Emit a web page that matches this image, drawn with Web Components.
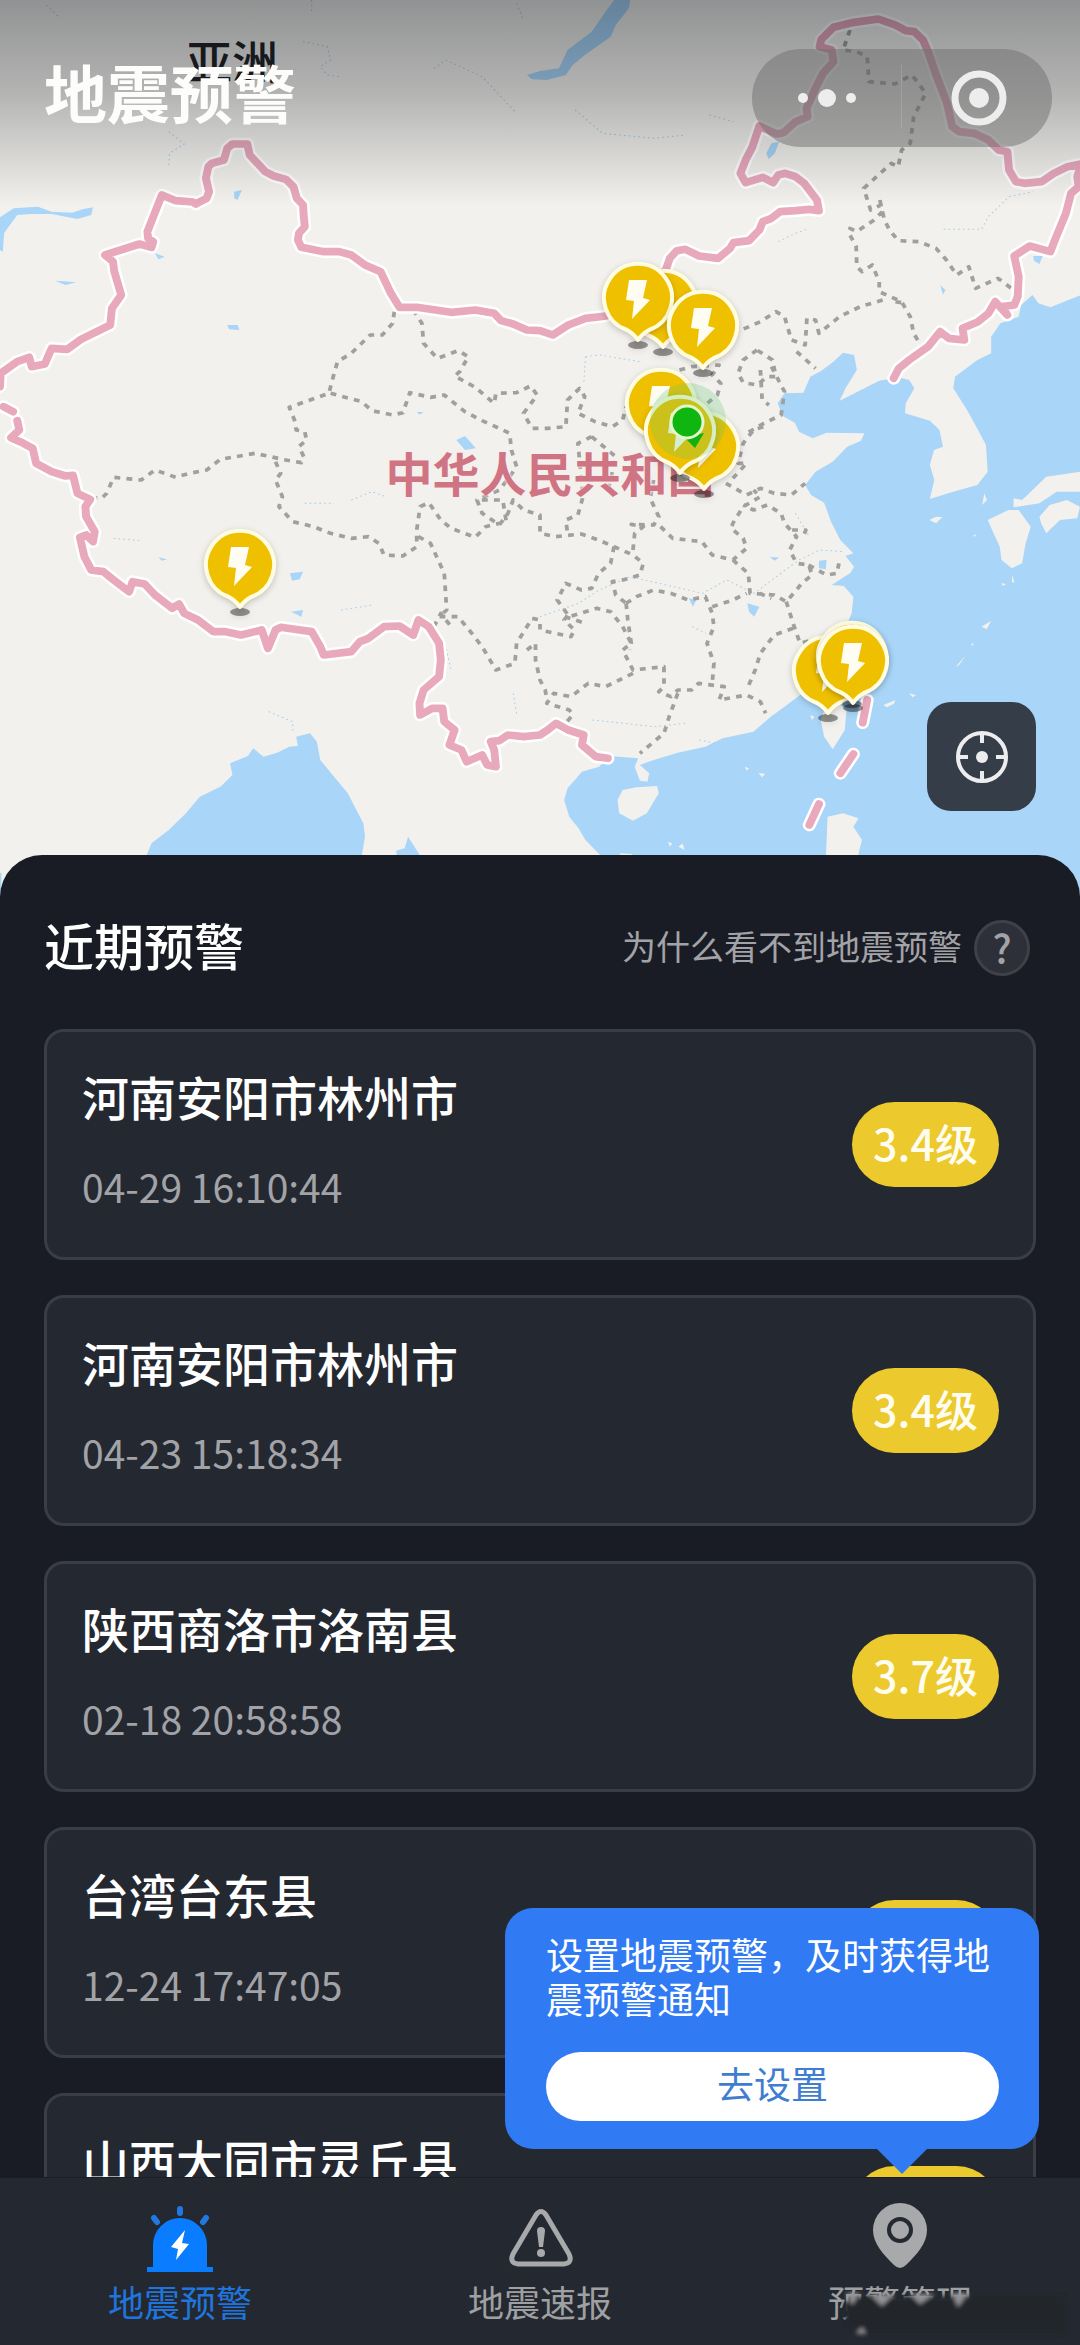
<!DOCTYPE html>
<html lang="zh-CN">
<head>
  <meta charset="utf-8">
  <meta name="viewport" content="width=device-width, initial-scale=1">
  <title>地震预警</title>
  <style>
    body {
      margin: 0;
      background: #191c24;
      font-family: "Noto Sans CJK SC", sans-serif;
    }
  </style>
</head>
<body>
  <quake-app>
    <quake-map slot="map">
      <map-label x="232" y="59">亚洲</map-label>
      <map-label x="550" y="472" country>中华人民共和国</map-label>
      <map-pin x="663" y="350"></map-pin>
      <map-pin x="638" y="343"></map-pin>
      <map-pin x="703" y="371"></map-pin>
      <map-pin x="661" y="449"></map-pin>
      <map-pin x="704" y="492"></map-pin>
      <map-pin x="680" y="476"></map-pin>
      <map-pin x="240" y="610"></map-pin>
      <map-pin x="828" y="716"></map-pin>
      <map-pin x="852" y="702"></map-pin>
      <map-pin x="853" y="706"></map-pin>
      <my-position x="687" y="422"></my-position>
    </quake-map>
    <warning-panel>
      <warning-card place="河南安阳市林州市" time="04-29 16:10:44" level="3.4级"></warning-card>
      <warning-card place="河南安阳市林州市" time="04-23 15:18:34" level="3.4级"></warning-card>
      <warning-card place="陕西商洛市洛南县" time="02-18 20:58:58" level="3.7级"></warning-card>
      <warning-card place="台湾台东县" time="12-24 17:47:05"></warning-card>
      <warning-card place="山西大同市灵丘县"></warning-card>
    </warning-panel>
    <tab-bar slot="tabs">
      <setup-tip slot="tip">
        设置地震预警，及时获得地震预警通知
        <span slot="action">去设置</span>
      </setup-tip>
    </tab-bar>
  </quake-app>

  <script>
    class QuakeApp extends HTMLElement {
      constructor() {
        super();
        this.attachShadow({ mode: 'open' }).innerHTML = `
          <style>
            :host {
              display: flex;
              flex-direction: column;
              height: 100vh;
            }

            main {
              flex: 1;
              min-height: 0;
              overflow: hidden;
            }
          </style>
          <main>
            <slot name="map"></slot>
            <slot></slot>
          </main>
          <slot name="tabs"></slot>
        `;
      }
    }

    // Everything on the map is placed on a 1080 x 900 grid
    class MapItem extends HTMLElement {
      connectedCallback() {
        this.style.left = `${this.getAttribute('x') / 1080 * 100}%`;
        this.style.top = `${this.getAttribute('y') / 900 * 100}%`;
      }
    }

    class MapLabel extends MapItem {
      constructor() {
        super();
        this.attachShadow({ mode: 'open' }).innerHTML = `
          <style>
            :host {
              position: absolute;
              transform: translate(-50%, -50%);
              white-space: nowrap;
              font-size: 46px;
              line-height: 64px;
              font-weight: 500;
              color: #202226;
            }

            :host([country]) {
              font-size: 47px;
              font-weight: 700;
              color: #cf7483;
              text-shadow: 0 0 3px #fbeeee, 0 0 3px #fbeeee;
            }
          </style>
          <slot></slot>
        `;
      }
    }

    class MapPin extends MapItem {
      constructor() {
        super();
        this.attachShadow({ mode: 'open' }).innerHTML = `
          <style>
            :host {
              position: absolute;
              transform: translate(-40px, -84px);
            }

            svg {
              display: block;
              filter: drop-shadow(0 2px 3px #0003);
            }
          </style>
          <svg width="80" height="96" viewBox="0 0 80 96" aria-hidden="true">
            <ellipse cx="40" cy="86" rx="10" ry="4" fill="#0006"/>
            <path d="M40 81Q36 75 29 71A34 34 0 1 1 51 71Q44 75 40 81Z" fill="#efc000" stroke="#fffce0" stroke-width="4" stroke-linejoin="round"/>
            <path d="M31 21H49L45 39L52 41L34 60L36 42L28 41Z" fill="#fffdf2"/>
          </svg>
        `;
      }
    }

    class MyPosition extends MapItem {
      constructor() {
        super();
        this.attachShadow({ mode: 'open' }).innerHTML = `
          <style>
            :host {
              position: absolute;
              transform: translate(-40px, -40px);
            }

            svg {
              display: block;
            }
          </style>
          <svg width="80" height="80" viewBox="0 0 80 80" aria-hidden="true">
            <circle cx="41" cy="39" r="38" fill="#5bc46d" fill-opacity=".25"/>
            <path d="M37 55L57 51L48 66Z" fill="#10b010"/>
            <circle cx="40" cy="40" r="16" fill="#0fb60f" stroke="#e4f7c8" stroke-width="3"/>
          </svg>
        `;
      }
    }

    class QuakeMap extends HTMLElement {
      constructor() {
        super();
        this.attachShadow({ mode: 'open' }).innerHTML = `
          <style>
            :host {
              display: block;
              position: relative;
              aspect-ratio: 1080 / 900;
              overflow: hidden;
              background: #f2f1ed;
            }

            .map {
              display: block;
              width: 100%;
            }

            header {
              position: absolute;
              inset: 0 0 auto 0;
              box-sizing: border-box;
              display: flex;
              justify-content: space-between;
              height: 206px;
              padding: 49px 28px 0 44px;
              background: linear-gradient(rgba(0, 4, 12, .4), rgba(0, 4, 12, .26) 45%, rgba(0, 4, 12, 0));
            }

            h1 {
              margin: 0;
              font-size: 63px;
              line-height: 84px;
              font-weight: 700;
              color: #fdfdfb;
            }

            .capsule {
              display: grid;
              grid-template-columns: 1fr 1fr;
              width: 300px;
              height: 98px;
              border-radius: 49px;
              background: rgba(112, 112, 112, .5);
            }

            button {
              padding: 0;
              border: 0;
              background: none;
              cursor: pointer;
            }

            .capsule svg {
              display: block;
            }

            .locate {
              position: absolute;
              right: 44px;
              bottom: 89px;
              display: grid;
              place-items: center;
              width: 109px;
              height: 109px;
              border-radius: 24px;
              background: #353e48;
            }

            .sea { fill: #a8d5f8; }
            .land { fill: #f2f1ed; }
            .river { fill: none; stroke: #a8cdec; stroke-width: 3; stroke-dasharray: 5 9; }
            .province { fill: none; stroke: #a0a09e; stroke-width: 11; stroke-dasharray: 17 18; stroke-linejoin: round; }
            .halo { fill: none; stroke: #fff; stroke-width: 38; stroke-linejoin: round; stroke-linecap: round; }
            .border { fill: none; stroke: #e9a9bd; stroke-width: 23; stroke-linejoin: round; stroke-linecap: round; }
          </style>
          <svg class="map" viewBox="0 0 1080 900" aria-hidden="true">
            <defs>
              <path id="frontier" d="M0 1160L2 1120L50 1085L85 1072L92 1100L130 1092L150 1045L195 1048L235 1018L320 975L325 925L352 885L332 815L328 785L305 765L405 732L440 742L445 725L430 715L428 695L470 585L510 602L560 606L568 612L600 595L607 575L598 535L605 500L615 490L650 480L660 445L675 432L718 432L725 465L770 515L795 528L830 538L852 560L862 595L880 615L882 650L885 680L868 700L865 720L875 742L940 755L985 755L1020 765L1060 795L1105 815L1135 880L1160 922L1210 922L1310 937L1380 930L1435 940L1455 962L1490 972L1530 990L1568 992L1605 1005L1650 975L1700 955L1760 948L1933 810L1945 775L1965 752L1990 748L2030 768L2085 775L2120 745L2130 728L2175 722L2205 690L2215 665L2240 655L2265 635L2310 632L2350 628L2378 632L2372 600L2335 550L2310 530L2280 520L2260 525L2245 548L2215 532L2165 548L2150 520L2165 480L2185 440L2205 378L2255 402L2275 398L2310 365L2345 350L2342 325L2370 260L2390 220L2420 185L2415 150L2380 140L2385 118L2420 82L2480 67L2550 57L2600 75L2630 92L2655 95L2680 120L2695 155L2720 230L2750 310L2765 380L2785 395L2830 400L2870 420L2900 450L2925 455L2930 510L2950 545L2975 550L3025 545L3060 520L3100 500L3140 492L3128 530L3132 560L3110 580L3095 640L3065 715L3050 755L2990 738L2945 768L2958 830L2955 890L2945 915L2910 920L2925 945L2890 905L2870 940L2840 965L2795 985L2800 1020L2755 1015L2730 995L2695 1040L2640 1080L2610 1105L2595 1135M10 1220L38 1235M50 1262L56 1290L32 1313L68 1330L95 1345L105 1390L150 1415L190 1428L212 1426L225 1480L262 1498L248 1520L250 1550L275 1595L270 1625L250 1605L232 1612L245 1670L265 1710L300 1715L330 1740L375 1775L385 1745L420 1752L450 1785L500 1825L520 1812L535 1840L575 1860L620 1895L655 1895L700 1905L760 1890L778 1945L800 1890L815 1882L905 1895L930 1940L940 1965L1020 1955L1045 1925L1070 1915L1115 1880L1160 1878L1200 1905L1215 1860L1245 1880L1275 1930L1280 1980L1275 2030L1230 2070L1218 2110L1220 2145L1255 2125L1285 2125L1290 2165L1320 2190L1305 2235L1340 2250L1355 2285L1400 2265L1415 2295L1440 2300L1435 2250L1425 2225L1450 2222L1475 2205L1520 2210L1568 2205L1590 2190L1615 2170L1650 2190L1695 2205L1690 2235L1730 2270L1765 2275M2518 2100L2505 2168M2478 2262L2440 2320M2378 2412L2350 2475"/>
            </defs>
            <!-- outlines below are drawn on a 3136 x 2700 grid -->
            <g transform="scale(.34439 .33333)">
              <path class="sea" d="M3140 885L3090 905L3050 922L3015 910L2998 885L2965 915L2958 950L2905 970L2878 1010L2878 1060L2838 1080L2773 1130L2768 1165L2808 1230L2840 1290L2863 1335L2868 1415L2838 1455L2768 1475L2700 1497L2713 1440L2700 1395L2712 1350L2738 1340L2728 1290L2700 1262L2628 1240L2630 1210L2655 1165L2640 1140L2608 1132L2553 1142L2500 1170L2438 1202L2455 1165L2488 1110L2480 1065L2448 1058L2420 1085L2385 1112L2353 1130L2333 1178L2278 1180L2258 1210L2273 1248L2308 1268L2320 1295L2360 1315L2400 1298L2510 1300L2500 1322L2460 1340L2418 1385L2368 1415L2338 1455L2355 1485L2393 1508L2413 1565L2440 1620L2478 1660L2455 1668L2480 1700L2470 1718L2415 1755L2450 1758L2478 1790L2473 1840L2458 1875L2440 1940L2400 2020L2330 2080L2278 2120L2238 2150L2188 2195L2098 2215L2048 2240L1968 2258L1898 2280L1858 2295L1885 2320L1880 2345L1858 2342L1843 2300L1853 2275L1768 2268L1740 2300L1690 2315L1648 2365L1638 2400L1653 2450L1680 2485L1700 2520L1745 2568L1800 2700H3140Z
                M420 2580L440 2530L490 2490L540 2440L580 2390L640 2360L675 2325L668 2290L720 2268L735 2245L765 2270L805 2258L840 2240L865 2238L860 2210L900 2200L920 2225L930 2280L970 2330L1010 2380L1030 2420L1055 2470L1060 2510L1048 2580Z
                M1150 2552L1175 2545L1185 2510L1228 2580H1155Z M-5 2615L4 2620V2700H-5Z
                M-5 655L40 625L110 620L150 635L210 638L240 628L270 622L265 645L225 657L150 642L90 642L50 645L25 680L12 700L8 755L0 750Z
                M1783 0H1830L1826 25L1788 75L1773 110L1698 165L1663 195L1643 225L1588 240L1545 238L1530 225L1568 213L1623 205L1648 150L1718 95L1748 50Z
                M2240 430L2262 425L2250 460L2232 478L2225 460Z M680 575L702 570L690 600L680 595Z M450 760L478 770L460 778Z M160 842L222 847L190 855Z M660 975L690 975L695 990L665 988Z
                M3000 768L3028 768L3018 792L3002 782Z M1325 1320L1350 1308L1382 1345L1350 1350Z M842 1720L880 1715L870 1738L848 1742Z M845 1835L880 1830L875 1850Z M2378 1682L2400 1680L2398 1708L2378 1705Z M2170 1810L2205 1820L2190 1850L2175 1835Z M2000 1795L2022 1800L2012 1820Z M2235 1672L2262 1672L2250 1682Z M1210 1235L1230 1237L1218 1244Z M460 1672L485 1678L470 1682Z M2730 855L2745 870L2738 885Z"/>
              <path class="land" d="M1793 2400L1808 2370L1848 2362L1908 2358L1913 2380L1878 2440L1838 2462L1798 2440Z
                M2458 2130L2453 2190L2418 2248L2393 2210L2383 2160L2408 2090Z
                M2403 2450L2448 2440L2493 2455L2478 2480L2503 2520L2493 2560V2700H2393Z
                M2698 1560L2718 1550L2736 1552L2718 1570Z
                M2868 1560L2928 1530L2958 1530L2993 1580L2978 1630L2968 1690L2938 1705L2908 1680L2903 1640L2885 1600Z
                M2943 1495L2968 1500L3038 1430L3136 1415V1475L3068 1475L3018 1510L2943 1522Z
                M3018 1550L3048 1515L3098 1500L3136 1520L3128 1555L3078 1560L3038 1600L3023 1570Z
                M2858 1480L2866 1500L2852 1515Z M2825 1607L2836 1602L2830 1610Z M2940 1725L2946 1748L2938 1745Z M2908 1750L2922 1752L2912 1758Z
                M2850 1880L2878 1862L2865 1888Z M2775 2000L2805 1965L2785 1995Z M2820 1930L2828 1932L2822 1938Z M2565 2115L2600 2100L2595 2112L2575 2122Z M2640 2080L2660 2085L2650 2092Z
                M2163 2300L2175 2305L2168 2312Z M2202 2318L2222 2322L2212 2332Z M2352 2145L2365 2150L2358 2160Z M1940 2525L1952 2530L1945 2540Z M1970 2540L1982 2530L1988 2550Z M1800 2560L1835 2562L1838 2570H1802Z"/>
              <path class="river" d="M490 395L535 432L492 460L490 500M880 125L950 140L960 180L930 200L950 225L985 230M905 0V40M1500 10L1520 60M135 15L170 50M1700 1070L1740 1065L1860 1085M1700 1070L1695 1150M2740 688L2850 688L2870 650L2930 590L3000 575M2260 725L2310 700L2350 685M1670 330L1750 400L1900 415L1990 405M2060 345L2130 365M1568 1850L1680 1810L1740 1770L1830 1730L2040 1780L2110 1740L2190 1780L2280 1710L2320 1680L2380 1650L2450 1655M780 2135L850 2165L850 2200M330 1615L410 1622M990 1830L1080 1815M1290 1920L1310 2010M1490 2080L1500 2140M1020 1500L1080 1475L1120 1490M885 1510L970 1510M1260 205L1295 180L1400 230L1500 340M1720 2160L1900 2180L1990 2170M2010 1880L2050 1900M2310 1540L2350 1610M2030 2220L2100 2235"/>
              <path class="province" d="M1145 935L1140 970L1110 1005L1075 1005L1020 1060L980 1085L965 1140L955 1180L840 1222L855 1260L860 1290L885 1295L890 1320L868 1340L882 1370L875 1388L830 1380L740 1360L640 1378L600 1410L550 1420L510 1432L450 1410L410 1440L330 1432L310 1480L295 1495L262 1493
                M1200 930L1225 970L1230 1030L1270 1075L1330 1052L1360 1070L1335 1115L1320 1128L1380 1162L1435 1210L1440 1180L1500 1178L1540 1158L1560 1185L1520 1240L1545 1285L1590 1285L1643 1280L1648 1200L1683 1165L1698 1190L1678 1240L1728 1265L1778 1280L1808 1260L1818 1220
                M960 1180L1050 1205L1080 1232L1140 1245L1170 1238L1190 1178L1250 1192L1290 1185L1350 1235L1400 1262L1450 1285L1480 1300L1485 1350L1500 1400L1480 1430L1450 1470L1385 1500L1400 1540L1450 1575L1475 1540L1490 1500L1520 1530L1568 1545V1600L1613 1610L1688 1602L1738 1620L1783 1640L1838 1665L1868 1690L1858 1725L1808 1740L1778 1745L1788 1785L1818 1810
                M800 1385L815 1420L800 1440L820 1490L810 1520L850 1565L910 1580L960 1600L1020 1615L1070 1610L1100 1630L1115 1665L1170 1668L1210 1640L1210 1590L1220 1520L1245 1508L1280 1560L1310 1585L1380 1612L1410 1580L1470 1565L1460 1500L1395 1500
                M1215 1610L1250 1630L1290 1720L1297 1830L1275 1850L1330 1850L1370 1900L1400 1940L1440 2010L1495 1990L1500 1930L1545 1855L1568 1860V1890L1658 1910L1668 1890L1638 1860L1653 1840
                M1260 1880L1280 1840L1310 1880M1530 1950L1555 1930V1980L1568 2040L1583 2070L1590 2110
                M1783 1640L1773 1690L1738 1720L1718 1765L1688 1770L1643 1750L1618 1800L1653 1850L1733 1825L1773 1835L1808 1880L1833 1930L1808 1950L1838 2010L1928 2000L1928 2060L1913 2075L1948 2090L1968 2070L2008 2070L2028 2050L2103 2060L2088 2100L2168 2085L2208 2105L2223 2140
                M1718 1310L1678 1330L1683 1380L1693 1490L1678 1545L1643 1560L1648 1600M1718 1310L1788 1370L1768 1460
                M1838 1650L1843 1600L1868 1580L1833 1573L1898 1575L1913 1550L1888 1495L1898 1440M1918 1580L1953 1615L2038 1625L2068 1665L2128 1680L2168 1645L2158 1615L2123 1585L2128 1570L2158 1520L2208 1490L2188 1470
                M2128 1680L2173 1720L2178 1780L2248 1785L2283 1805L2313 1770L2328 1750L2358 1725L2348 1695L2313 1690L2293 1650L2313 1610L2278 1570L2268 1540L2228 1515L2188 1530L2158 1515
                M2348 1695L2400 1725L2430 1720L2436 1690M2300 1590L2340 1590L2330 1615M2108 1450L2168 1485L2208 1465L2248 1480L2298 1485L2338 1450
                M1818 1810L1848 1790L1898 1770L1948 1780L1998 1800L2048 1790L2068 1840L2073 1880L2053 1930L2073 1990L2068 2050M2068 1820L2128 1800L2168 1780M2205 1780L2240 1795
                M2283 1805L2303 1870L2323 1930L2358 1920M2303 1885L2248 1905L2208 1960L2193 2010L2168 2070M1818 1810L1823 1860L1833 1930L1830 1950
                M1838 2020L1758 2060L1708 2050L1658 2090L1608 2080L1588 2110L1653 2130L1663 2145L1638 2175M1640 1850L1700 1870
                M1968 2080L1943 2150L1928 2200L1858 2260M2128 1435L2168 1390L2143 1390L2158 1330L2188 1290L2218 1280
                M2468 90L2448 150L2488 155L2518 170L2523 245L2598 252L2648 225L2688 280L2653 350L2643 430L2618 450L2608 500L2588 490L2508 565L2528 630L2558 615L2568 660L2583 690L2608 722L2668 725L2718 745L2748 780L2778 825L2813 800L2833 865L2898 835L2943 870
                M2555 600L2562 635L2538 660L2488 695L2468 685V705L2486 740L2488 800L2503 815L2533 795L2553 845V875L2618 905L2643 950L2653 1000L2673 1035M2600 905L2630 910
                M2563 900L2498 920L2438 950L2378 1000L2368 960L2343 955L2338 1035L2298 1020L2278 950L2253 935L2208 965L2148 992
                M2313 1055L2368 1105M2198 1050L2158 1080L2143 1120L2158 1148L2198 1155L2228 1130L2253 1130L2243 1080L2198 1050M2208 1110L2213 1200L2233 1215M2240 1100L2278 1175L2268 1245L2218 1270L2168 1300
                M1973 1110L2008 1100L2088 1095L2068 1125L2093 1150L2083 1185L2048 1215"/>
              <use href="#frontier" class="halo"/>
              <use href="#frontier" class="border"/>
            </g>
          </svg>
          <slot></slot>
          <header>
            <h1>地震预警</h1>
            <div class="capsule">
              <button type="button" aria-label="更多">
                <svg width="150" height="98" viewBox="0 0 150 98" fill="#ededed">
                  <circle cx="51" cy="49" r="5"/>
                  <circle cx="75" cy="49" r="9"/>
                  <circle cx="99" cy="49" r="5"/>
                  <path d="M149 16h1v64h-1z" fill="#fff2"/>
                </svg>
              </button>
              <button type="button" aria-label="关闭">
                <svg width="150" height="98" viewBox="0 0 150 98" fill="#ededed">
                  <circle cx="77" cy="49" r="24" fill="none" stroke="#ededed" stroke-width="7"/>
                  <circle cx="77" cy="49" r="10"/>
                </svg>
              </button>
            </div>
          </header>
          <button class="locate" type="button" aria-label="定位">
            <svg width="60" height="60" viewBox="0 0 60 60" fill="none" stroke="#ededf0" stroke-width="4">
              <circle cx="30" cy="30" r="24"/>
              <path d="M30 6v10M30 44v10M6 30h10M44 30h10"/>
              <circle cx="30" cy="30" r="6" fill="#ededf0" stroke="none"/>
            </svg>
          </button>
        `;
      }
    }

    class WarningPanel extends HTMLElement {
      constructor() {
        super();
        this.attachShadow({ mode: 'open' }).innerHTML = `
          <style>
            :host {
              display: block;
              position: relative;
              margin-top: -45px;
              padding: 65px 44px 0;
              border-radius: 42px 42px 0 0;
              background: #191c24;
            }

            header {
              display: flex;
              align-items: center;
              justify-content: space-between;
              padding-right: 6px;
              margin-bottom: 53px;
              height: 56px;
            }

            h2 {
              margin: 0;
              padding-bottom: 8px;
              font-size: 50px;
              line-height: 56px;
              font-weight: 500;
              color: #fff;
            }

            a {
              display: flex;
              align-items: center;
              gap: 12px;
              font-size: 34px;
              line-height: 48px;
              color: #a2a3a7;
              text-decoration: none;
            }

            .text {
              padding-bottom: 4px;
            }

            .mark {
              box-sizing: border-box;
              width: 56px;
              height: 56px;
              border: 3px solid #3f4149;
              border-radius: 50%;
              background: #2e3039;
              font-size: 39px;
              font-weight: 500;
              text-align: center;
            }

            .list {
              display: grid;
              gap: 35px;
            }
          </style>
          <header>
            <h2>近期预警</h2>
            <a href="#why"><span class="text">为什么看不到地震预警</span><span class="mark">?</span></a>
          </header>
          <div class="list"><slot></slot></div>
        `;
      }
    }

    class WarningCard extends HTMLElement {
      constructor() {
        super();
        this.attachShadow({ mode: 'open' });
      }

      get #style() {
        return `
          <style>
            :host {
              display: flex;
              align-items: center;
              justify-content: space-between;
              padding: 0 34px 0 35px;
              border: 3px solid #3a3d45;
              border-radius: 20px;
              background: #242831;
            }

            .body {
              display: grid;
              gap: 30px;
              padding: 32px 0 43px;
            }

            h3 {
              margin: 0;
              font-size: 47px;
              line-height: 64px;
              font-weight: 500;
              color: #fff;
            }

            time {
              min-height: 56px;
              font-size: 39px;
              line-height: 56px;
              color: #a2a3a7;
            }

            .level {
              box-sizing: border-box;
              width: 147px;
              height: 85px;
              padding-bottom: 5px;
              border-radius: 43px;
              background: #ecc92d;
              font-size: 43px;
              line-height: 80px;
              font-weight: 500;
              text-align: center;
              color: #fffdf0;
            }
          </style>
        `;
      }

      connectedCallback() {
        this.shadowRoot.innerHTML = `
          ${this.#style}
          <div class="body">
            <h3>${this.getAttribute('place')}</h3>
            <time>${this.getAttribute('time') ?? ''}</time>
          </div>
          <div class="level">${this.getAttribute('level') ?? ''}</div>
        `;
      }
    }

    class SetupTip extends HTMLElement {
      constructor() {
        super();
        this.attachShadow({ mode: 'open' }).innerHTML = `
          <style>
            :host {
              position: absolute;
              right: 41px;
              bottom: calc(100% + 28px);
              box-sizing: border-box;
              width: 534px;
              padding: 24px 40px 28px 41px;
              border-radius: 28px;
              background: #307af4;
              font-size: 37px;
              line-height: 44px;
              color: #fff;
            }

            :host::after {
              content: "";
              position: absolute;
              right: 112px;
              top: 100%;
              border: 25px solid transparent;
              border-top-color: #307af4;
              border-bottom: 0;
            }

            p {
              margin: 0 0 32px;
            }

            button {
              display: block;
              width: 100%;
              height: 69px;
              padding: 0 0 8px;
              border: 0;
              border-radius: 35px;
              background: #fff;
              font: inherit;
              color: #3f7dd0;
              cursor: pointer;
            }
          </style>
          <p><slot></slot></p>
          <button type="button"><slot name="action"></slot></button>
        `;
      }
    }

    class TabBar extends HTMLElement {
      constructor() {
        super();
        this.attachShadow({ mode: 'open' }).innerHTML = `
          <style>
            :host {
              display: block;
              position: relative;
              background: #242830;
            }

            nav {
              display: grid;
              grid-template-columns: repeat(3, 1fr);
              box-shadow: inset 0 1px #1b1e26;
            }

            a {
              position: relative;
              display: grid;
              justify-items: center;
              gap: 4px;
              padding: 24px 0 20px;
              font-size: 36px;
              line-height: 48px;
              color: #9fa0a2;
              text-decoration: none;
            }

            .active {
              color: #1f75dc;
            }

            /* the smear over the last label */
            .smear {
              position: absolute;
              left: 120px;
              bottom: 6px;
            }
          </style>
          <slot name="tip"></slot>
          <nav>
            <a class="active" href="#warning">
              <svg width="72" height="72" viewBox="0 0 72 72" aria-hidden="true">
                <path d="M9 66V44a27 27 0 0 1 54 0v22h6v5H3v-5z" fill="#0a7cff"/>
                <path d="M36 8v4M10 17l3 4M62 17l-3 4" stroke="#2078e0" stroke-width="6" stroke-linecap="round"/>
                <path d="M41 29L27 46L34 48L32 59L45 43L38 42Z" fill="#fff"/>
              </svg>
              <span>地震预警</span>
            </a>
            <a href="#report">
              <svg width="72" height="72" viewBox="0 0 72 72" aria-hidden="true">
                <path d="M32 14Q37 7 42 14L65 53Q69 62 60 63H14Q5 62 9 53Z" fill="none" stroke="#a8a9aa" stroke-width="5" stroke-linejoin="round"/>
                <path d="M33 30Q33 26 37 26Q41 26 41 30L39 46H35Z" fill="#a8a9aa"/>
                <circle cx="37" cy="52" r="4" fill="#a8a9aa"/>
              </svg>
              <span>地震速报</span>
            </a>
            <a href="#manage">
              <svg width="72" height="72" viewBox="0 0 72 72" aria-hidden="true">
                <path d="M36 2A27 27 0 0 0 9 29C9 43 20 54 30 64Q36 70 42 64C52 54 63 43 63 29A27 27 0 0 0 36 2Z" fill="#a8a9aa"/>
                <circle cx="36" cy="29" r="11" fill="none" stroke="#242830" stroke-width="4"/>
              </svg>
              <span>预警管理</span>
              <svg class="smear" width="240" height="48" viewBox="0 0 240 48" aria-hidden="true">
                <defs>
                  <filter id="soft"><feGaussianBlur stdDeviation="2"/></filter>
                </defs>
                <g filter="url(#soft)">
                  <path d="M4 12Q20 2 50 5H225V43H24Q2 40 4 12Z" fill="#24262b"/>
                  <path d="M6 2H20L12 14ZM30 3H54L42 15ZM70 3H94L80 13ZM112 2H128L118 16ZM16 43L22 36L26 43Z" fill="#929395"/>
                </g>
              </svg>
            </a>
          </nav>
        `;
      }
    }

    customElements.define('quake-app', QuakeApp);
    customElements.define('map-label', MapLabel);
    customElements.define('map-pin', MapPin);
    customElements.define('my-position', MyPosition);
    customElements.define('quake-map', QuakeMap);
    customElements.define('warning-panel', WarningPanel);
    customElements.define('warning-card', WarningCard);
    customElements.define('setup-tip', SetupTip);
    customElements.define('tab-bar', TabBar);
  </script>
</body>
</html>
